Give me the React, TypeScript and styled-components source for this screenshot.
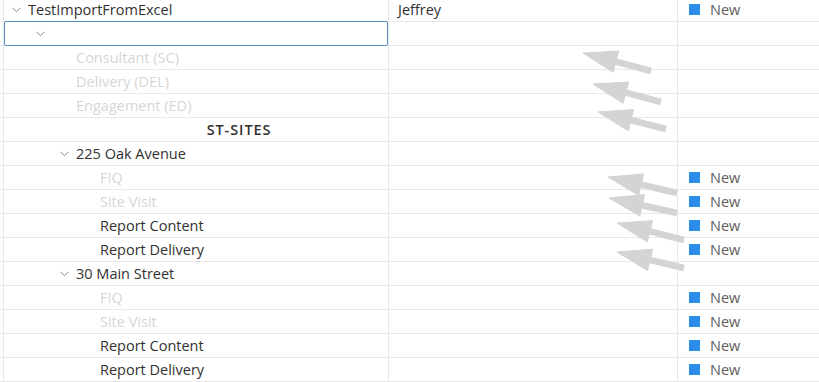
import * as React from 'react'
import styled, { createGlobalStyle } from 'styled-components'

type Tone = 'dark' | 'faded' | 'header'

type Item = {
  level: number
  label?: string
  tone?: Tone
  expandable?: boolean
  selected?: boolean
  owner?: string
  status?: string
}

const rows: Item[] = [
  { level: 0, label: 'TestImportFromExcel', expandable: true, owner: 'Jeffrey', status: 'New' },
  { level: 1, expandable: true, selected: true },
  { level: 2, label: 'Consultant (SC)', tone: 'faded' },
  { level: 2, label: 'Delivery (DEL)', tone: 'faded' },
  { level: 2, label: 'Engagement (ED)', tone: 'faded' },
  { level: 2, label: 'ST-SITES', tone: 'header' },
  { level: 2, label: '225 Oak Avenue', expandable: true },
  { level: 3, label: 'FIQ', tone: 'faded', status: 'New' },
  { level: 3, label: 'Site Visit', tone: 'faded', status: 'New' },
  { level: 3, label: 'Report Content', status: 'New' },
  { level: 3, label: 'Report Delivery', status: 'New' },
  { level: 2, label: '30 Main Street', expandable: true },
  { level: 3, label: 'FIQ', tone: 'faded', status: 'New' },
  { level: 3, label: 'Site Visit', tone: 'faded', status: 'New' },
  { level: 3, label: 'Report Content', status: 'New' },
  { level: 3, label: 'Report Delivery', status: 'New' },
]

// annotation arrows: tail -> tip
const arrows = [
  [651, 71, 583, 53],
  [661, 102, 593, 84],
  [666, 129, 598, 112],
  [677, 193, 608, 177],
  [677, 213, 609, 198],
  [684, 240, 617, 223],
  [684, 268, 617, 252],
]

const Chevron = () => (
  <svg width="9" height="6" viewBox="0 0 9 6">
    <polyline points="0.5,0.8 4.5,4.8 8.5,0.8" fill="none" stroke="#8a8886" strokeWidth="1" />
  </svg>
)

const Arrow = ({ x1, y1, x2, y2 }: { x1: number; y1: number; x2: number; y2: number }) => {
  const dx = x2 - x1
  const dy = y2 - y1
  const len = Math.sqrt(dx * dx + dy * dy)
  const ux = dx / len
  const uy = dy / len
  const head = 34
  const half = 11
  const bx = x2 - ux * head
  const by = y2 - uy * head
  const px = -uy * half
  const py = ux * half
  return (
    <g fill="#d4d4d4" stroke="#d4d4d4">
      <line x1={x1} y1={y1} x2={bx + ux * 4} y2={by + uy * 4} strokeWidth="6.5" />
      <polygon points={`${x2},${y2} ${bx + px},${by + py} ${bx - px},${by - py}`} strokeWidth="1" />
    </g>
  )
}

export default () => {
  return (
    <Page>
      <GlobalStyle />
      <Table>
        {rows.map((row, i) => (
          <Row key={i}>
            <NameCell $selected={!!row.selected}>
              <Indent $level={row.level}>
                <Toggle>{row.expandable && <Chevron />}</Toggle>
                {row.label && (
                  <Label $tone={row.tone || 'dark'}>{row.label}</Label>
                )}
              </Indent>
            </NameCell>
            <OwnerCell>{row.owner}</OwnerCell>
            <StatusCell>
              {row.status && (
                <>
                  <Swatch />
                  <StatusText>{row.status}</StatusText>
                </>
              )}
            </StatusCell>
          </Row>
        ))}
      </Table>
      <Overlay width="819" height="382" viewBox="0 0 819 382">
        {arrows.map(([x1, y1, x2, y2], i) => (
          <Arrow key={i} x1={x1} y1={y1} x2={x2} y2={y2} />
        ))}
      </Overlay>
    </Page>
  )
}

const GlobalStyle = createGlobalStyle`
  html, body {
    margin: 0;
    padding: 0;
    background: #fff;
    overflow: hidden;
  }
  body {
    font-family: 'Open Sans', 'Liberation Sans', sans-serif;
  }
`

const Page = styled.div`
  position: relative;
  width: 819px;
  height: 382px;
  overflow: hidden;
  background: #fff;
`

const Table = styled.div`
  display: flex;
  flex-direction: column;
  margin-top: -2px;
`

const Row = styled.div`
  display: grid;
  grid-template-columns: 386px 289px 1fr;
  height: 24px;
  padding-left: 3px;
  border-bottom: 1px solid #e8e8e8;
  box-sizing: border-box;
`

const NameCell = styled.div<{ $selected: boolean }>`
  position: relative;
  border-left: 1px solid #e8e8e8;
  border-right: 1px solid #e8e8e8;
  box-sizing: border-box;
  display: flex;
  align-items: center;
  min-width: 0;

  ${(p) =>
    p.$selected &&
    `
    &::after {
      content: '';
      position: absolute;
      left: 0;
      right: 0;
      top: -1px;
      bottom: -1px;
      border: 1px solid #5a8cc6;
      border-radius: 2px;
    }
  `}
`

const Indent = styled.div<{ $level: number }>`
  display: flex;
  align-items: center;
  flex: 1;
  padding-left: ${(p) => 8 + p.$level * 24}px;
  height: 100%;
`

const Toggle = styled.span`
  display: flex;
  align-items: center;
  justify-content: flex-start;
  width: 16px;
  flex-shrink: 0;
`

const Label = styled.span<{ $tone: Tone }>`
  font-size: 14.5px;
  white-space: nowrap;
  color: ${(p) => (p.$tone === 'faded' ? '#d6d6d6' : '#323130')};
  font-weight: ${(p) => (p.$tone === 'header' ? 600 : 400)};
  ${(p) =>
    p.$tone === 'header' &&
    `
    flex: 1;
    text-align: center;
    padding-left: 14px;
    letter-spacing: 0.9px;
  `}
`

const OwnerCell = styled.div`
  display: flex;
  align-items: center;
  padding-left: 9px;
  border-right: 1px solid #e8e8e8;
  font-size: 14.5px;
  color: #323130;
`

const StatusCell = styled.div`
  display: flex;
  align-items: center;
  padding-left: 11px;
  gap: 10px;
`

const Swatch = styled.span`
  width: 11px;
  height: 11px;
  background: #2a8ee8;
`

const StatusText = styled.span`
  font-size: 14.5px;
  color: #605e5c;
`

const Overlay = styled.svg`
  position: absolute;
  top: 0;
  left: 0;
  pointer-events: none;
`
